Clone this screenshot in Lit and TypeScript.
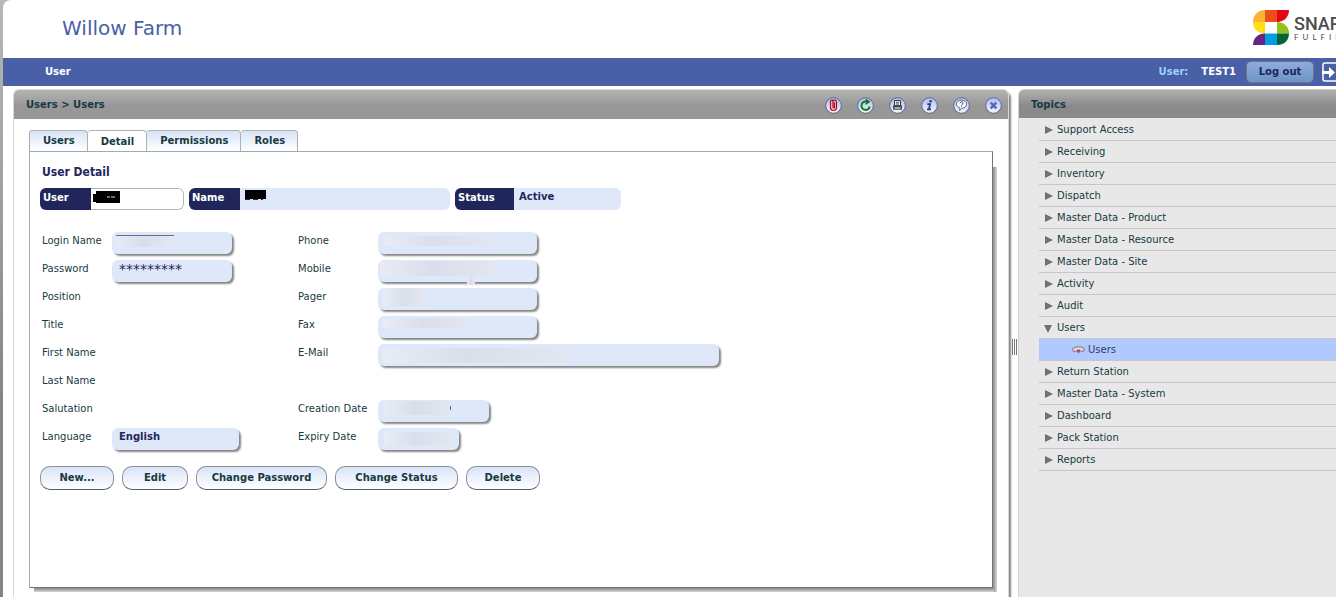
import { LitElement, html, css, svg, nothing } from "lit";
import { customElement, state } from "lit/decorators.js";
import { styleMap } from "lit/directives/style-map.js";
import { classMap } from "lit/directives/class-map.js";

interface Patch { x: number; y: number; w: number; h: number; }
interface Field {
  id: string;
  label: string;
  col: number;
  row: number;
  width?: number;
  value?: string;
  kind?: string;
  patches?: Patch[];
}

const FIELDS: Field[] = [
  { id: "login", label: "Login Name", col: 1, row: 1, width: 120, kind: "lined", patches: [{ x: 4, y: 3, w: 58, h: 12 }] },
  { id: "password", label: "Password", col: 1, row: 2, width: 120, value: "*********", kind: "stars" },
  { id: "position", label: "Position", col: 1, row: 3 },
  { id: "title", label: "Title", col: 1, row: 4 },
  { id: "first", label: "First Name", col: 1, row: 5 },
  { id: "last", label: "Last Name", col: 1, row: 6 },
  { id: "salutation", label: "Salutation", col: 1, row: 7 },
  { id: "language", label: "Language", col: 1, row: 8, width: 127, value: "English" },
  { id: "phone", label: "Phone", col: 3, row: 1, width: 159, patches: [{ x: 6, y: 4, w: 108, h: 10 }] },
  { id: "mobile", label: "Mobile", col: 3, row: 2, width: 159, patches: [{ x: 2, y: 1, w: 116, h: 15 }, { x: 89, y: 16, w: 8, h: 9 }] },
  { id: "pager", label: "Pager", col: 3, row: 3, width: 159, patches: [{ x: 5, y: 0, w: 44, h: 18 }] },
  { id: "fax", label: "Fax", col: 3, row: 4, width: 159, patches: [{ x: 5, y: 2, w: 88, h: 10 }] },
  { id: "email", label: "E-Mail", col: 3, row: 5, width: 341, patches: [{ x: 5, y: 4, w: 185, h: 15 }] },
  { id: "created", label: "Creation Date", col: 3, row: 7, width: 111, kind: "tick", patches: [{ x: 6, y: 1, w: 66, h: 14 }] },
  { id: "expiry", label: "Expiry Date", col: 3, row: 8, width: 81, patches: [{ x: 6, y: 4, w: 69, h: 13 }] },
];

const ACTIONS = [
  { label: "New...", width: 74 },
  { label: "Edit", width: 66 },
  { label: "Change Password", width: 131 },
  { label: "Change Status", width: 123 },
  { label: "Delete", width: 74 },
];

const TOPICS = [
  "Support Access", "Receiving", "Inventory", "Dispatch", "Master Data - Product",
  "Master Data - Resource", "Master Data - Site", "Activity", "Audit", "Users",
  "Return Station", "Master Data - System", "Dashboard", "Pack Station", "Reports",
];

const TOOLS = [
  { name: "Attachments", glyph: svg`<path d="M5.500 4.500v6a3 3 0 0 0 6 0v-5.500a2 2 0 0 0-3.500-1.300V10.500a.8.8 0 0 0 1.500 0V5.500M8 4a1.300 1.300 0 0 0-2.500.5" fill="none" stroke="#c00010" stroke-width="1.200"/>` },
  { name: "Refresh", glyph: svg`<path d="M12.800 9.500a4.200 4.200 0 1 1-4-5" fill="none" stroke="#0f7a12" stroke-width="2"/><path d="M8.600 1.500l4.800 3.200-4.800 3.300z" fill="#0f7a12"/>` },
  { name: "Print", glyph: svg`<path d="M5.500 3.500h6v5h-6z" fill="#fff" stroke="#333" /><path d="M6.800 5.300h3.400M6.800 7h3.400" stroke="#333" stroke-width=".9"/><path d="M4 8.300h9v4.400H4z" fill="#4a4a4a"/><path d="M5.500 11h6" stroke="#fff"/>` },
  { name: "Information", glyph: svg`<circle cx="9.600" cy="4.300" r="1.300" fill="#2b3c84"/><path d="M6.300 7.200h2.800l-1.200 5M6 12.400h4" fill="none" stroke="#2b3c84" stroke-width="1.700"/>` },
  { name: "Help", glyph: svg`<path d="M8.500 3.200c3 0 5 1.700 5 4s-2 4-4.400 4L6.600 13.700l.4-2.800C5 10.300 3.500 9 3.500 7.200c0-2.300 2-4 5-4z" fill="#fff" stroke="#555b70" stroke-width=".9"/><path d="M7.200 6.200a1.400 1.400 0 1 1 2 1.200c-.5.3-.6.500-.6 1M8.600 9.200v1" fill="none" stroke="#333b6b" stroke-width="1"/>` },
  { name: "Close", glyph: svg`<path d="M5.700 5.700l5.600 5.600M11.300 5.700l-5.600 5.600" stroke="#5564b4" stroke-width="2.400"/>` },
];

@customElement("app-root")
export class AppRoot extends LitElement {
  @state() private tab = "Detail";

  static styles = css`
    :host {
      display: block;
      min-height: 100vh;
      overflow: hidden;
      background: linear-gradient(#b8b8b8, #858585 400px);
      padding-left: 3px;
      box-sizing: border-box;
      font: 10px/14px "DejaVu Sans", Verdana, sans-serif;
      color: #173a42;
    }
    * { box-sizing: border-box; }
    button, input { font: inherit; color: inherit; margin: 0; padding: 0; }
    button { cursor: pointer; }
    a { color: inherit; text-decoration: none; }
    .shell {
      min-height: 100vh;
      background: #fff;
      border-top-left-radius: 8px;
      display: flex;
      flex-direction: column;
      overflow: hidden;
    }
    .brand {
      height: 58px;
      display: flex;
      justify-content: space-between;
      padding: 10px 0 0 59px;
    }
    .brand h1 { margin: 0; font-size: 20px; line-height: 36px; font-weight: 400; color: #4960a6; }
    .logo { width: 83px; display: flex; gap: 5px; white-space: nowrap; color: #4d4d4f; }
    .logo svg { flex: none; }
    .words { padding-top: 4px; font-family: Roboto, sans-serif; }
    .words strong { display: block; font-size: 18px; line-height: 19px; font-weight: 500; }
    .words span { display: block; font: 8px/8px Lato, sans-serif; letter-spacing: 4px; }
    .bar {
      height: 28px;
      background: #4960a6;
      color: #fff;
      font-weight: 700;
      display: flex;
      align-items: center;
      padding-left: 42px;
      overflow: hidden;
    }
    .bar nav { flex: 1; }
    .who { color: #9fd0ff; margin-right: 13px; }
    .logout {
      margin: 0 8px 0 10px;
      width: 68px;
      height: 22px;
      border: 1px solid #6f7480;
      border-radius: 5px;
      background: linear-gradient(#90abdc, #6f93c8);
      color: #202659;
      font-weight: 700;
    }
    .exit { width: 14px; height: 20px; border: 0; background: none; display: flex; }
    .exit svg { flex: none; }
    .work { flex: 1; display: flex; padding: 3px 0 0 10px; }
    .panel {
      flex: 1;
      min-width: 0;
      border: 1px solid #d9d9d9;
      border-width: 1px 1px 0;
      border-radius: 6px 6px 0 0;
      box-shadow: 2px 3px 2px #858585;
      background: #fff;
      display: flex;
      flex-direction: column;
    }
    .cap {
      height: 29px;
      border-radius: 5px 5px 0 0;
      background: linear-gradient(#b4b4b4, #979797 16px);
      font-weight: 700;
      display: flex;
      align-items: center;
      justify-content: space-between;
      padding: 0 6px 0 12px;
    }
    .cap h2 { margin: 0; font-size: 10px; line-height: 14px; }
    .tools { display: flex; gap: 15px; padding-top: 1px; }
    .tool { width: 17px; height: 17px; border: 0; background: none; display: block; }
    .tool svg { display: block; }
    .content { padding: 11px 15px 9px 15px; flex: 1; display: flex; flex-direction: column; }
    .tabs { display: flex; align-items: flex-end; }
    .tab {
      height: 21px;
      padding: 0 12px 0 13px;
      border: 1px solid #a9b3b3;
      border-bottom: 0;
      border-left-width: 0;
      border-radius: 3px 4px 0 0;
      background: linear-gradient(#d8e3f6, #fff);
      font-weight: 700;
      white-space: nowrap;
    }
    .tab:first-child { border-left-width: 1px; }
    .tab.on { background: #fff; height: 22px; margin-bottom: -1px; position: relative; }
    .sheet {
      flex: 1;
      border: 1px solid #9fadad;
      border-right-color: #6f7777;
      border-bottom-color: #6f7777;
      background: #fff;
      padding: 11px 10px 0;
      position: relative;
    }
    .sheet::before, .sheet::after { content: ""; position: absolute; }
    .sheet::before { top: 15px; bottom: -5px; right: -5px; width: 4px; background: linear-gradient(90deg, #8a8a8a, #d8d8d8); }
    .sheet::after { left: 4px; right: -2px; bottom: -5px; height: 4px; background: linear-gradient(#858585, #d8d8d8); }
    .sheet h3 { margin: 0 2px; font: 700 12px/18px "DejaVu Sans Condensed", "DejaVu Sans", sans-serif; font-stretch: condensed; color: #22275b; }
    .keys { display: flex; gap: 5px; margin-top: 7px; font-weight: 700; }
    .key { display: flex; height: 22px; border-radius: 6px; background: #dfe8f8; overflow: hidden; position: relative; }
    .key label { width: 51px; background: #20265a; color: #fff; padding: 3px 3px; }
    .key label.wide { width: 59px; }
    .key input { border: 0; background: none; outline: 0; color: #22275b; font-weight: 700; padding: 0 5px 5px; }
    .key input.edit { width: 93px; border: 1px solid #b4b4b4; border-left: 0; background: #fff; border-radius: 0 6px 6px 0; }
    .key input.name { width: 210px; }
    .key input.status { width: 107px; }
    .key svg { position: absolute; left: 53px; top: 2px; }
    .form {
      display: grid;
      grid-template-columns: 72px 184px 82px 1fr;
      grid-auto-rows: 28px;
      margin: 22px 0 0;
    }
    .form label { padding: 2px 2px; white-space: nowrap; }
    .box { position: relative; justify-self: start; height: 22px; }
    .box input {
      display: block;
      width: 100%;
      height: 22px;
      border: 0;
      outline: 0;
      border-radius: 6px;
      background: #dfe8f8;
      box-shadow: 2px 2px 2px #858585;
      color: #22275b;
      font-weight: 700;
      padding: 0 7px 5px;
    }
    .box input.stars { font: 14px/16px "DejaVu Sans", sans-serif; padding-bottom: 4px; }
    .patch { position: absolute; background: linear-gradient(90deg, #e8ecf5, #d9deea 45%, #e2e7f1); }
    .lined .patch { border-top: 1px solid #66688c; }
    .tick .patch::after { content: ""; position: absolute; left: 100%; top: 5px; width: 1px; height: 4px; background: #5a5fa0; }
    .actions { display: flex; gap: 8px; margin-top: 10px; }
    .action {
      height: 24px;
      border: 1px solid #8a9199;
      border-bottom-color: #565c66;
      border-radius: 10px;
      background: linear-gradient(#d8e3f8, #fff);
      font-weight: 700;
      white-space: nowrap;
    }
    .split { width: 9px; padding: 8px 0 0 3px; display: flex; align-items: center; }
    .grip { width: 5px; height: 16px; background: repeating-linear-gradient(90deg, #777 0 1px, #fff 1px 2px); position: relative; }
    .side {
      width: 318px;
      background: #e8e8e8;
      border-left: 1px solid #d2d2d2;
      border-top-left-radius: 6px;
    }
    .side h2 {
      margin: 0;
      height: 29px;
      margin-bottom: 1px;
      padding-left: 12px;
      font-size: 10px;
      line-height: 29px;
      background: linear-gradient(#b0b0b0, #8a8a8a 16px);
      border-top: 1px solid #c8c8c8;
      border-top-left-radius: 6px;
    }
    .side ul { margin: 0 0 0 20px; padding: 0; list-style: none; }
    .topic { height: 22px; border-bottom: 1px solid #c6c6c6; }
    .topic a { height: 21px; display: flex; align-items: center; gap: 3px; padding-left: 5px; }
    .topic.chosen { background: #b0c9ff; color: #31415f; }
    .topic.chosen a { padding-left: 33px; }
  `;

  private renderField(f: Field) {
    const place = (c: number) => styleMap({ gridColumn: String(c), gridRow: String(f.row) });
    if (!f.width) return html`<label style=${place(f.col)}>${f.label}</label>`;
    return html`
      <label for=${f.id} style=${place(f.col)}>${f.label}</label>
      <span
        class="box ${f.kind ?? ""}"
        style=${styleMap({ gridColumn: String(f.col + 1), gridRow: String(f.row), width: `${f.width}px` })}
      >
        <input id=${f.id} class=${f.kind ?? ""} readonly .value=${f.value ?? ""} />
        ${(f.patches ?? []).map(
          (p) => html`<span class="patch" style=${styleMap({ left: `${p.x}px`, top: `${p.y}px`, width: `${p.w}px`, height: `${p.h}px` })}></span>`
        )}
      </span>`;
  }

  private renderTopic(name: string) {
    const open = name === "Users";
    return html`
      <li class="topic">
        <a href="#">
          <svg width="10" height="10" viewBox="0 0 10 10">
            <path d=${open ? "M0 2h8l-4 8z" : "M1 1l8 4-8 4z"} fill="#687474" />
          </svg>
          ${name}
        </a>
      </li>
      ${open
        ? html`<li class="topic chosen">
            <a href="#">
              <svg width="13" height="9" viewBox="0 0 13 9">
                <path d="M3 6.500C0 6 0 3.500 2.500 2.500 5 1.500 8 1.500 10.500 2.500 13 3.500 13 6 10 6.500" fill="#dcdff0" stroke="#8d8378" stroke-width="1.400" stroke-dasharray="2 .6" />
                <path d="M5 4.500h3v2L6.500 8.500 5 6.500z" fill="#a844a8" />
                <circle cx="4" cy="6" r="1" fill="#b98a7a" /><circle cx="9" cy="6" r="1" fill="#b98a7a" />
              </svg>
              Users
            </a>
          </li>`
        : nothing}`;
  }

  render() {
    return html`
      <div class="shell">
        <header class="brand">
          <h1>Willow Farm</h1>
          <div class="logo">
            <svg width="36" height="36" viewBox="0 0 36 36">
              <path d="M12 0v12H0C0 5 5 0 12 0z" fill="#f9b233" />
              <path d="M12 0h12v12H12z" fill="#e94e1b" />
              <path d="M24 0h12c0 7-5 12-12 12z" fill="#e30613" />
              <path d="M0 12h12v11.500C5 23.500 0 19 0 12z" fill="#ffde17" />
              <path d="M24 12c7 0 12 4.500 12 11.500H24z" fill="#95c11f" />
              <path d="M12 23.500V35H0c0-7 5-11.500 12-11.500z" fill="#662483" />
              <path d="M12 23.500h12V35H12z" fill="#009fe3" />
              <path d="M24 23.500h12C36 30.500 31 35 24 35z" fill="#006633" />
            </svg>
            <div class="words"><strong>SNAP</strong><span>FULFIL</span></div>
          </div>
        </header>
        <div class="bar">
          <nav><a href="#">User</a></nav>
          <span class="who">User:</span><span>TEST1</span>
          <button class="logout">Log out</button>
          <button class="exit" aria-label="Exit">
            <svg width="20" height="20" viewBox="0 0 20 20">
              <rect x="1" y="1" width="18" height="18" rx="2" fill="none" stroke="#fff" stroke-width="1.500" />
              <path d="M0 9h7V5l6 5.500-6 5.500v-4H0z" fill="#fff" />
            </svg>
          </button>
        </div>
        <div class="work">
          <main class="panel">
            <div class="cap">
              <h2>Users &gt; Users</h2>
              <div class="tools">
                ${TOOLS.map(
                  (t) => html`<button class="tool" aria-label=${t.name}>
                    <svg width="17" height="17" viewBox="0 0 17 17">
                      <defs>
                        <linearGradient id="disc" x2="0" y2="1"><stop stop-color="#a9bdf0" /><stop offset="1" stop-color="#f4f7ff" /></linearGradient>
                      </defs>
                      <circle cx="8.500" cy="8.500" r="7.800" fill="url(#disc)" stroke="#5a6596" stroke-width="1" />
                      ${t.glyph}
                    </svg>
                  </button>`
                )}
              </div>
            </div>
            <div class="content">
              <div class="tabs">
                ${["Users", "Detail", "Permissions", "Roles"].map(
                  (t) => html`<button class=${classMap({ tab: true, on: t === this.tab })} @click=${() => (this.tab = t)}>${t}</button>`
                )}
              </div>
              <section class="sheet">
                <h3>User Detail</h3>
                <div class="keys">
                  <div class="key">
                    <label for="user">User</label><input id="user" class="edit" />
                    <svg width="28" height="14" viewBox="0 0 28 14">
                      <path d="M3 1h24v12H3v-1H0V4h3z" fill="#000" />
                      <path d="M14 7h3M18 7h4" stroke="#ddd" />
                    </svg>
                  </div>
                  <div class="key">
                    <label for="name">Name</label><input id="name" class="name" readonly />
                    <svg width="28" height="14" viewBox="0 0 28 14">
                      <path d="M3 0h21v9H3z" fill="#000" />
                      <path d="M3 9.500h5M11 9.500h5M19 9.500h2" stroke="#22275b" />
                    </svg>
                  </div>
                  <div class="key">
                    <label for="status" class="wide">Status</label><input id="status" class="status" readonly .value=${"Active"} />
                  </div>
                </div>
                <div class="form">${FIELDS.map((f) => this.renderField(f))}</div>
                <div class="actions">
                  ${ACTIONS.map((a) => html`<button class="action" style=${styleMap({ width: `${a.width}px` })}>${a.label}</button>`)}
                </div>
              </section>
            </div>
          </main>
          <div class="split"><span class="grip"></span></div>
          <aside class="side">
            <h2>Topics</h2>
            <ul>${TOPICS.map((t) => this.renderTopic(t))}</ul>
          </aside>
        </div>
      </div>
    `;
  }
}
